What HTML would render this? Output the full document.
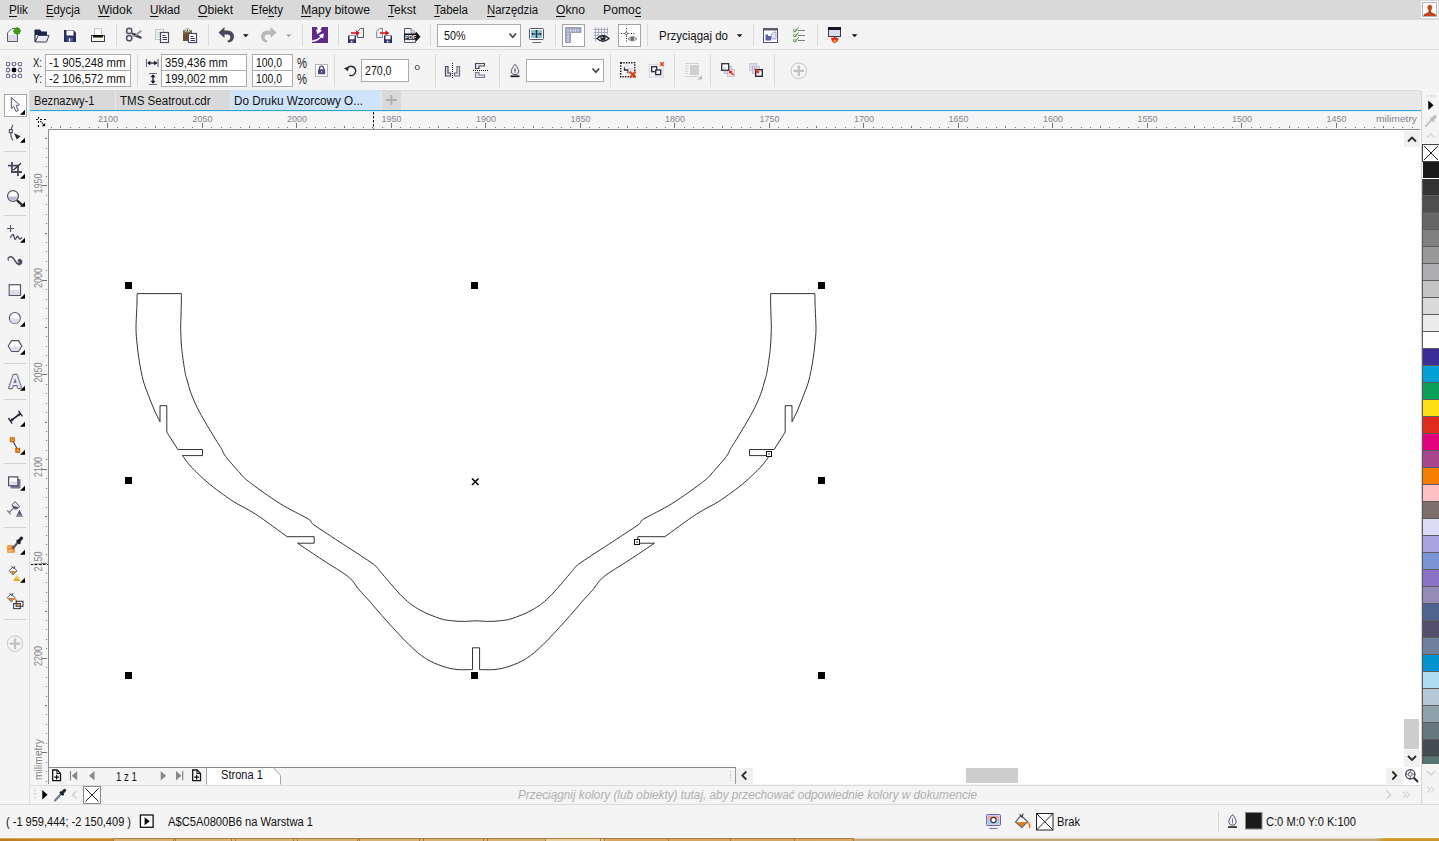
<!DOCTYPE html>
<html lang="pl">
<head>
<meta charset="utf-8">
<title>CorelDRAW - Do Druku Wzorcowy</title>
<style>
html,body{margin:0;padding:0;}
body{width:1439px;height:841px;overflow:hidden;position:relative;background:#f4f4f4;font-family:"Liberation Sans",sans-serif;font-size:12px;color:#1a1a1a;}
.a{position:absolute;}
.t{position:absolute;white-space:nowrap;transform-origin:0 50%;display:block;}
.t u{text-decoration:underline;text-decoration-thickness:1px;text-underline-offset:1.5px;}
.vs{position:absolute;width:1px;background:#dadada;}
.hs{position:absolute;height:1px;background:#d8d8d8;}
.box{position:absolute;background:#fff;border:1px solid #acacac;box-sizing:border-box;}
svg{position:absolute;overflow:visible;}
#menubar{left:0;top:0;width:1439px;height:20px;background:#d9d9d9;}
#tb1{left:0;top:20px;width:1439px;height:29px;background:#f4f4f4;}
#pbar{left:0;top:50px;width:1439px;height:40px;background:#f4f4f4;}
#tabrow{left:30px;top:90px;width:1391px;height:20px;background:#e8e8e8;}
#blueline{left:30px;top:110px;width:1391px;height:1px;background:#389fd2;}
#toolbox{left:0;top:90px;width:29px;height:714px;background:#f4f4f4;}
#hruler{left:30px;top:111px;width:1391px;height:18px;background:#f5f5f5;}
#vruler{left:30px;top:129px;width:18px;height:655px;background:#f5f5f5;}
#canvas{left:48px;top:129px;width:1355px;height:639px;background:#fff;}
</style>
</head>
<body>
<div id="menubar" class="a"></div>
<div id="tb1" class="a"></div>
<div class="hs" style="left:0;top:49px;width:1439px;background:#dedede"></div>
<div id="pbar" class="a"></div>
<div class="hs" style="left:0;top:89px;width:1439px;background:#f6f6f6"></div>
<div id="tabrow" class="a"></div>
<div class="hs" style="left:30px;top:90px;width:1391px;background:#dadada"></div>
<div id="toolbox" class="a"></div>
<div class="vs" style="left:29px;top:90px;height:714px;background:#dedede"></div>
<div id="hruler" class="a"></div>
<div id="vruler" class="a"></div>
<div id="canvas" class="a"></div>
<div id="blueline" class="a"></div>
<!-- menu bar -->
<span class="t" style="left:9px;top:2px;height:17px;line-height:17px;font-size:12px;color:#111;transform:scaleX(0.9814);"><u>P</u>lik</span>
<span class="t" style="left:46px;top:2px;height:17px;line-height:17px;font-size:12px;color:#111;transform:scaleX(0.9436);"><u>E</u>dycja</span>
<span class="t" style="left:98px;top:2px;height:17px;line-height:17px;font-size:12px;color:#111;transform:scaleX(1.0197);"><u>W</u>idok</span>
<span class="t" style="left:150px;top:2px;height:17px;line-height:17px;font-size:12px;color:#111;transform:scaleX(0.9776);"><u>U</u>kład</span>
<span class="t" style="left:198px;top:2px;height:17px;line-height:17px;font-size:12px;color:#111;transform:scaleX(1.0086);"><u>O</u>biekt</span>
<span class="t" style="left:251px;top:2px;height:17px;line-height:17px;font-size:12px;color:#111;transform:scaleX(0.9593);">Efe<u>k</u>ty</span>
<span class="t" style="left:301px;top:2px;height:17px;line-height:17px;font-size:12px;color:#111;transform:scaleX(1.0241);"><u>M</u>apy bitowe</span>
<span class="t" style="left:388px;top:2px;height:17px;line-height:17px;font-size:12px;color:#111;transform:scaleX(0.9994);"><u>T</u>ekst</span>
<span class="t" style="left:434px;top:2px;height:17px;line-height:17px;font-size:12px;color:#111;transform:scaleX(0.9611);"><u>T</u>abela</span>
<span class="t" style="left:487px;top:2px;height:17px;line-height:17px;font-size:12px;color:#111;transform:scaleX(0.9439);"><u>N</u>arzędzia</span>
<span class="t" style="left:556px;top:2px;height:17px;line-height:17px;font-size:12px;color:#111;transform:scaleX(1.0103);"><u>O</u>kno</span>
<span class="t" style="left:603px;top:2px;height:17px;line-height:17px;font-size:12px;color:#111;transform:scaleX(1.0171);">Pomo<u>c</u></span>
<!-- standard toolbar -->
<div class="vs" style="left:116px;top:24px;height:22px"></div>
<div class="vs" style="left:208px;top:24px;height:22px"></div>
<div class="vs" style="left:302px;top:24px;height:22px"></div>
<div class="vs" style="left:338px;top:24px;height:22px"></div>
<div class="vs" style="left:430px;top:24px;height:22px"></div>
<div class="vs" style="left:555px;top:24px;height:22px"></div>
<div class="vs" style="left:647px;top:24px;height:22px"></div>
<div class="vs" style="left:753px;top:24px;height:22px"></div>
<div class="vs" style="left:817px;top:24px;height:22px"></div>
<div class="box" style="left:437px;top:24px;width:84px;height:23px;border-color:#a9a9a9"></div>
<div class="box" style="left:562px;top:24px;width:23px;height:23px;border-color:#a3a3a3"></div>
<div class="box" style="left:618px;top:24px;width:23px;height:23px;border-color:#a3a3a3"></div>
<span class="t" style="left:443.5px;top:26.5px;height:18px;line-height:18px;font-size:12.5px;color:#111;transform:scaleX(0.8589);">50%</span>
<span class="t" style="left:658.5px;top:26.5px;height:18px;line-height:18px;font-size:12.5px;color:#111;transform:scaleX(0.9194);">Przyciągaj do</span>
<svg width="1439" height="52" viewBox="0 0 1439 52" style="left:0;top:0">
<!-- new -->
<path d="M7.5 41.5V33L12 28.5H17.5V41.5Z" fill="#fff" stroke="#5a5a66" stroke-width="1"/>
<rect x="8" y="35" width="9" height="6" fill="#dcdce8"/>
<circle cx="17" cy="31" r="3.2" fill="#3f9a1c"/>
<path d="M17 27v8M13 31h8M14.2 28.2l5.6 5.6M19.8 28.2l-5.6 5.6" stroke="#3f9a1c" stroke-width="1.3"/>
<!-- open -->
<path d="M35 41.5V29.5H40L41.5 31.5H47V35H35Z" fill="#1f2548"/>
<path d="M35.5 42L38 35.5H49L46.5 42Z" fill="#e9e9f2" stroke="#3c3c5a" stroke-width="1"/>
<path d="M35 30v12" stroke="#1f2548" stroke-width="1.2"/>
<!-- save -->
<path d="M64 30H73.5L76 32.5V42H64Z" fill="#2c2e62"/>
<rect x="66.5" y="30.5" width="7" height="5" fill="#fff"/>
<rect x="67" y="37.5" width="6" height="4.5" fill="#50528a"/>
<rect x="69" y="38.5" width="1.2" height="3" fill="#fff"/>
<!-- print -->
<rect x="94.500" y="28.500" width="7" height="8" fill="#fff" stroke="#c5c5c5" stroke-width="1"/>
<rect x="91.500" y="35.500" width="13" height="6" fill="#f6f6dc" stroke="#3a3a4a" stroke-width="1"/>
<rect x="93" y="35" width="10" height="2.500" fill="#111"/>
<rect x="92" y="38" width="12" height="1" fill="#fff"/>
<!-- cut -->
<circle cx="129.200" cy="30.900" r="2.600" fill="none" stroke="#50506a" stroke-width="1.500"/>
<circle cx="129.200" cy="38.200" r="2.600" fill="none" stroke="#50506a" stroke-width="1.500"/>
<path d="M131 32.300L134.500 33.300L142 37L141 39L133 36Z" fill="#4a4a54"/>
<path d="M131 36.800L134 35L141 29.800L142 31.800L135.500 36.200Z" fill="#9c9ca4"/>
<circle cx="134.800" cy="34.400" r="0.900" fill="#111"/>
<!-- copy -->
<rect x="155.500" y="29.500" width="8" height="10" fill="#eef2f2" stroke="#b8c8c8" stroke-width="1"/>
<path d="M157 32.500h5M157 34.500h5M157 36.500h5" stroke="#c5d3d3" stroke-width="1"/>
<rect x="160.500" y="32.500" width="8" height="10" fill="#fff" stroke="#4a4a68" stroke-width="1.200"/>
<path d="M162.500 35.500h3M162.500 37.500h4.500M162.500 39.500h4.500" stroke="#3a3a55" stroke-width="1"/>
<!-- paste -->
<rect x="183" y="30.500" width="9" height="10.500" fill="#6b4f35"/>
<rect x="183" y="30.500" width="9" height="3" fill="#8a6a48"/>
<path d="M185 31.500Q185 28.300 187.500 28.300Q190 28.300 190 31.500Z" fill="#e9efe4" stroke="#9aa78c" stroke-width="0.800"/>
<circle cx="187.500" cy="30.300" r="0.700" fill="#222"/>
<rect x="188.500" y="33.500" width="8" height="9" fill="#fff" stroke="#4a4a68" stroke-width="1.200"/>
<path d="M190.500 36.500h3M190.500 38.500h4.500M190.500 40.500h4.500" stroke="#3a3a55" stroke-width="1"/>
<!-- undo -->
<path d="M218.500 32.500L224.500 27V30.500H227.500C231.500 30.500 234 33.300 234 36.500C234 39.800 231.500 42.300 228.300 42.500L227.300 40.800C229.300 40.300 230.300 38.800 230.300 37.200C230.300 35.500 229 34.500 227.500 34.500H224.500V38Z" fill="#4a4858"/>
<path d="M243 34.300h5.600l-2.800 3z" fill="#111"/>
<!-- redo -->
<path d="M276.500 32.500L270.500 27V30.500H267.500C263.500 30.500 261 33.300 261 36.500C261 39.800 263.500 42.300 266.700 42.500L267.700 40.800C265.700 40.300 264.700 38.800 264.700 37.200C264.700 35.500 266 34.500 267.500 34.500H270.500V38Z" fill="#b9b9b9"/>
<path d="M286 34.300h5.600l-2.800 3z" fill="#a8a8a8"/>
<!-- corel connect purple -->
<rect x="312" y="27" width="16" height="16" fill="#5b2a86"/>
<path d="M312.300 41.900C316 41.600 319.500 40 321.300 37.300L323.200 38.500L323.700 33.300L318.700 35.300L320.300 36.400C318.500 38.700 315.500 39.700 312.300 40.100Z" fill="#fff"/>
<path d="M317 27H321.900L320.400 30.100L322.100 30.700L317.200 34.200L316.100 29.200L317.900 29.800Z" fill="#fff"/>
<!-- import -->
<path d="M357.500 37.500V31.500L360.500 28.500H363.500V37.500Z" fill="#ececf2" stroke="#555566" stroke-width="1"/>
<path d="M351 33h6" stroke="#d8121f" stroke-width="1.600"/>
<path d="M356 30.300L359.800 33L356 35.700Z" fill="#d8121f"/>
<rect x="348" y="35.500" width="8" height="7.500" fill="#2c2e62"/>
<rect x="349.500" y="36" width="5" height="3.300" fill="#fff"/>
<rect x="350" y="40.300" width="4" height="2.700" fill="#50528a"/>
<rect x="351.200" y="40.800" width="1" height="1.700" fill="#fff"/>
<!-- export -->
<path d="M376.500 37.500V31.500L379.500 28.500H382.500V37.500Z" fill="#ececf2" stroke="#8a8a96" stroke-width="1"/>
<path d="M380 33h6.500" stroke="#d8121f" stroke-width="1.600"/>
<path d="M385.500 30.300L389.300 33L385.500 35.700Z" fill="#d8121f"/>
<rect x="384" y="35.500" width="8" height="7.500" fill="#2c2e62"/>
<rect x="385.500" y="36" width="5" height="3.300" fill="#fff"/>
<rect x="386" y="40.300" width="4" height="2.700" fill="#50528a"/>
<rect x="387.200" y="40.800" width="1" height="1.700" fill="#fff"/>
<!-- pdf -->
<path d="M404.500 42.500V28.500H411L415.500 33V42.500Z" fill="#f1f1f5" stroke="#55556a" stroke-width="1"/>
<path d="M411 28.500V33H415.500" fill="#dcdce6" stroke="#8a8a9a" stroke-width="0.800"/>
<path d="M404 33.500H416V31.500L420.500 36.700L416 41.500V39.700H404Z" fill="#15151f"/>
<text x="405" y="39" font-family="Liberation Sans, sans-serif" font-weight="bold" font-size="5.600" fill="#fff" textLength="11" lengthAdjust="spacingAndGlyphs">PDF</text>
<!-- zoom chevron -->
<path d="M509.500 33.500L512.800 37.300L516.100 33.500" fill="none" stroke="#444" stroke-width="1.700"/>
<!-- full screen -->
<rect x="529.500" y="28.500" width="14" height="11" rx="1" fill="#fff" stroke="#55556a" stroke-width="1"/>
<rect x="531" y="30" width="11" height="8" fill="#8fc4d6"/>
<path d="M532 34h9M536.500 30.500v7" stroke="#15303c" stroke-width="1.100"/>
<path d="M531.300 34l1.800-1.500v3zM541.700 34l-1.800-1.500v3zM536.500 29.800l-1.500 1.800h3zM536.500 38.200l-1.500-1.800h3z" fill="#15303c"/>
<path d="M532.500 42.500h8.500" stroke="#6a6a80" stroke-width="1"/>
<!-- rulers -->
<path d="M565.500 27.500H581V32.500H570.500V42.500H565.500Z" fill="#a3a8c0" stroke="#8c92ac" stroke-width="0.800"/>
<path d="M568 29.500v2M570.500 29.500v2M573 29.500v2M575.500 29.500v2M578 29.500v2M567 34h2M567 36.500h2M567 39h2M567 41h2" stroke="#e8eaf4" stroke-width="1"/>
<!-- grid + eye -->
<path d="M593.500 29.500h14M593.500 32.500h14M593.500 35.500h6M593.500 38.500h4M595.500 27.500v14M598.500 27.500v9M601.500 27.500v7M604.500 27.500v7M607.500 27.500v7" stroke="#a9a9c4" stroke-width="1"/>
<path d="M597 38.500Q603 32.500 609 38.500Q603 44 597 38.500Z" fill="#f4f4f4" stroke="#222230" stroke-width="1.300"/>
<circle cx="603" cy="38" r="2.600" fill="#2a2a36"/>
<circle cx="602.200" cy="37.200" r="0.800" fill="#ddd"/>
<!-- guidelines + eye -->
<path d="M621 33.500h15M626.500 28v15" stroke="#222" stroke-width="1" stroke-dasharray="1 1.500"/>
<circle cx="626.500" cy="33.500" r="1.200" fill="#fff" stroke="#333" stroke-width="0.700"/>
<path d="M628 39Q632.500 34 637 39Q632.500 43 628 39Z" fill="#d9d9dd" stroke="#8a8a90" stroke-width="1"/>
<circle cx="632.300" cy="38.700" r="2" fill="#6e6e78"/>
<!-- snap dropdown -->
<path d="M736.800 34.300h5.600l-2.800 3z" fill="#111"/>
<!-- options -->
<rect x="763.500" y="28.500" width="14" height="14" fill="#fff" stroke="#555568" stroke-width="1"/>
<rect x="763" y="28" width="15" height="2.500" fill="#5c5a72"/>
<path d="M765.500 34.500H768V36H771V40.500H765.500Z" fill="#5d5ea9"/>
<path d="M771.500 34L773.500 32H776V39H771.500Z" fill="#dfe0f2" stroke="#8a8cc0" stroke-width="0.700"/>
<!-- checklist -->
<path d="M798 30.500h7M798 35.500h7M798 40.500h7" stroke="#7a7a86" stroke-width="1"/>
<rect x="793.500" y="29.500" width="2.500" height="2.500" fill="#f6fff0" stroke="#8ab87a" stroke-width="0.600"/>
<rect x="793.500" y="34.500" width="2.500" height="2.500" fill="#f6fff0" stroke="#8ab87a" stroke-width="0.600"/>
<rect x="793.500" y="39.500" width="2.500" height="2.500" fill="#f6fff0" stroke="#8ab87a" stroke-width="0.600"/>
<path d="M793.500 30.300l1.500 1.500l3.500-4.300M793.500 35.300l1.500 1.500l3.500-4.300M793.500 40.300l1.500 1.500l3.500-4.300" fill="none" stroke="#357f25" stroke-width="1"/>
<!-- launch -->
<rect x="828.500" y="27.500" width="12" height="9" fill="#dcdcea" stroke="#3a3a4e" stroke-width="1"/>
<rect x="828" y="27" width="13" height="3" fill="#161624"/>
<path d="M831 37.500Q831 41.500 834.700 43.300Q838.600 41.500 838.600 37.500Q837 39 836.300 37Q835 38 834.500 36.500Q833 38.800 831 37.500Z" fill="#e32a1a"/>
<path d="M832.800 40.300Q834.700 44 837 40.300Q835.300 41.200 835 39.300Q834 40.900 832.800 40.300Z" fill="#ffb31a"/>
<path d="M851.800 34.300h5.600l-2.800 3z" fill="#111"/>
</svg>
<!-- property bar -->
<div class="vs" style="left:137px;top:54px;height:33px"></div>
<div class="vs" style="left:334px;top:54px;height:33px"></div>
<div class="vs" style="left:435px;top:54px;height:33px"></div>
<div class="vs" style="left:499px;top:54px;height:33px"></div>
<div class="vs" style="left:610px;top:54px;height:33px"></div>
<div class="vs" style="left:674px;top:54px;height:33px"></div>
<div class="vs" style="left:710px;top:54px;height:33px"></div>
<div class="vs" style="left:774px;top:54px;height:33px"></div>
<div class="box" style="left:45px;top:54px;width:86px;height:17px"></div>
<div class="box" style="left:45px;top:70px;width:86px;height:17px"></div>
<div class="box" style="left:161px;top:54px;width:86px;height:17px"></div>
<div class="box" style="left:161px;top:70px;width:86px;height:17px"></div>
<div class="box" style="left:252px;top:54px;width:41px;height:17px"></div>
<div class="box" style="left:252px;top:70px;width:41px;height:17px"></div>
<div class="box" style="left:315px;top:64px;width:13px;height:13px;border-color:#b4b4b4"></div>
<div class="box" style="left:361px;top:59px;width:48px;height:23px"></div>
<div class="box" style="left:526px;top:59px;width:78px;height:23px"></div>
<span class="t" style="left:33px;top:54px;height:18px;line-height:18px;font-size:12.5px;color:#111;transform:scaleX(0.7619);">X:</span>
<span class="t" style="left:33px;top:70px;height:18px;line-height:18px;font-size:12.5px;color:#111;transform:scaleX(0.8090);">Y:</span>
<span class="t" style="left:48.5px;top:54px;height:18px;line-height:18px;font-size:12.5px;color:#111;transform:scaleX(0.9099);">-1 905,248 mm</span>
<span class="t" style="left:48.5px;top:70px;height:18px;line-height:18px;font-size:12.5px;color:#111;transform:scaleX(0.9099);">-2 106,572 mm</span>
<span class="t" style="left:164.5px;top:54px;height:18px;line-height:18px;font-size:12.5px;color:#111;transform:scaleX(0.8995);">359,436 mm</span>
<span class="t" style="left:164.5px;top:70px;height:18px;line-height:18px;font-size:12.5px;color:#111;transform:scaleX(0.8995);">199,002 mm</span>
<span class="t" style="left:256px;top:54px;height:18px;line-height:18px;font-size:12.5px;color:#111;transform:scaleX(0.8312);">100,0</span>
<span class="t" style="left:256px;top:70px;height:18px;line-height:18px;font-size:12.5px;color:#111;transform:scaleX(0.8312);">100,0</span>
<span class="t" style="left:296.5px;top:52.5px;height:20px;line-height:20px;font-size:14px;color:#222;transform:scaleX(0.8030);">%</span>
<span class="t" style="left:296.5px;top:68.5px;height:20px;line-height:20px;font-size:14px;color:#222;transform:scaleX(0.8030);">%</span>
<span class="t" style="left:364.5px;top:61.5px;height:18px;line-height:18px;font-size:12.5px;color:#111;transform:scaleX(0.8472);">270,0</span>
<svg width="1439" height="92" viewBox="0 0 1439 92" style="left:0;top:0">
<!-- object origin -->
<path d="M8 64h12v12h-12zM14 64v12M8 70h12" fill="none" stroke="#9a9ab4" stroke-width="1"/>
<g fill="#f4f4f4" stroke="#7c7c9c" stroke-width="1">
<rect x="6.500" y="62.500" width="3" height="3"/><rect x="12.500" y="62.500" width="3" height="3"/><rect x="18.500" y="62.500" width="3" height="3"/>
<rect x="6.500" y="68.500" width="3" height="3"/><rect x="18.500" y="68.500" width="3" height="3"/>
<rect x="6.500" y="74.500" width="3" height="3"/><rect x="12.500" y="74.500" width="3" height="3"/><rect x="18.500" y="74.500" width="3" height="3"/>
</g>
<rect x="12" y="68" width="4" height="4" fill="#000"/>
<!-- width icon -->
<path d="M146.500 59v8M158 59v8" stroke="#6a6a8a" stroke-width="1.200"/>
<path d="M148 63h9" stroke="#1a1a2a" stroke-width="1.300"/>
<path d="M147.300 63l3-2.600v5.200zM157.200 63l-3-2.600v5.200z" fill="#1a1a2a"/>
<!-- height icon -->
<path d="M149 73.500h8M149 84.500h8" stroke="#6a6a8a" stroke-width="1.200"/>
<path d="M153 75v8" stroke="#1a1a2a" stroke-width="1.300"/>
<path d="M153 74.300l-2.600 3h5.200zM153 83.800l-2.600-3h5.200z" fill="#1a1a2a"/>
<!-- lock -->
<path d="M319.500 69.500v-1.300a2 2 0 0 1 4.200 0v1.300" fill="none" stroke="#4a4878" stroke-width="1.400"/>
<rect x="318" y="69.300" width="7.200" height="5" rx="0.600" fill="#4a4878"/>
<rect x="321.200" y="71" width="0.900" height="1.600" fill="#d8d8ec"/>
<!-- rotate -->
<path d="M347.300 68.300A4.600 4.600 0 1 1 349.300 75.200" fill="none" stroke="#2a2a34" stroke-width="1.500"/>
<path d="M344 68.200l5-1.800l-1.200 4.800z" fill="#2a2a34"/>
<!-- degree -->
<circle cx="417.300" cy="67.500" r="2.100" fill="none" stroke="#444" stroke-width="1"/>
<!-- mirror h -->
<path d="M445.500 66.500h2.500v6.500h2.500v3h-5z" fill="#e4e4f0" stroke="#4a4a5e" stroke-width="1.200"/>
<path d="M459.500 66.500h-2.500v6.500h-2.500v3h5z" fill="#e4e4f0" stroke="#6c6c84" stroke-width="1.200"/>
<path d="M452.500 63v15" stroke="#111" stroke-width="1" stroke-dasharray="1 1"/>
<!-- mirror v -->
<path d="M475.500 63.500h9v2.500h-5.500v2.500h-3.500z" fill="#e4e4f0" stroke="#4a4a5e" stroke-width="1.200"/>
<path d="M475.500 77.500h9v-2.500h-5.500v-2.500h-3.500z" fill="#e4e4f0" stroke="#7c7c94" stroke-width="1.200"/>
<path d="M473 70.500h15" stroke="#111" stroke-width="1" stroke-dasharray="1 1"/>
<!-- pen nib -->
<path d="M515 64.300C512.500 67 511.200 70 511.200 72L513 74.500h4L518.800 72C518.800 70 517.500 67 515 64.300Z" fill="#f0f0f6" stroke="#55556e" stroke-width="1"/>
<path d="M515 68v5" stroke="#55556e" stroke-width="0.800"/>
<circle cx="515" cy="70.500" r="0.800" fill="#55556e"/>
<rect x="510.500" y="75.500" width="9" height="1.600" fill="#111"/>
<!-- combo chevron -->
<path d="M592.500 68.500L595.800 72.300L599.100 68.500" fill="none" stroke="#444" stroke-width="1.700"/>
<!-- ungroup -->
<rect x="620.700" y="62.700" width="14" height="14" fill="none" stroke="#16161e" stroke-width="1.400" stroke-dasharray="1.400 1.200"/>
<rect x="624.500" y="66" width="3.600" height="3.600" fill="#fff" stroke="#c8c8d4" stroke-width="0.700"/>
<path d="M624.500 67.500v2.500h3.500v2.700h3" fill="none" stroke="#2a2a3a" stroke-width="1.300"/>
<rect x="628.500" y="68.800" width="3.500" height="3.500" fill="none" stroke="#c0c0d0" stroke-width="0.700"/>
<path d="M629.800 71.500l5.800 6M635.600 71.500l-5.800 6" stroke="#e2400f" stroke-width="1.800"/>
<!-- ungroup all -->
<rect x="649.500" y="64.500" width="13.500" height="12.500" fill="#f3f3f7" stroke="#d2d2dc" stroke-width="0.800"/>
<g fill="#dcdce6"><rect x="648.500" y="63.500" width="2" height="2"/><rect x="655" y="63.500" width="2" height="2"/><rect x="648.500" y="69.500" width="2" height="2"/><rect x="662" y="69.500" width="2" height="2"/><rect x="648.500" y="76" width="2" height="2"/><rect x="655" y="76" width="2" height="2"/><rect x="662" y="76" width="2" height="2"/></g>
<rect x="651.700" y="66.700" width="5" height="5" fill="#f6f6fa" stroke="#2a2a3a" stroke-width="1.300"/>
<rect x="655.700" y="70" width="5" height="4.600" fill="#f6f6fa" stroke="#2a2a3a" stroke-width="1.300"/>
<path d="M660.200 62.300l3.600 3.600M663.800 62.300l-3.600 3.600" stroke="#e2400f" stroke-width="1.400"/>
<!-- wrap (disabled) -->
<path d="M685 63.500h14M685 66h3.500M685 68.500h3.500M685 71h3.500M685 73.500h3.500M685 76.500h14" stroke="#d2d2d2" stroke-width="1"/>
<rect x="690.500" y="65.500" width="8" height="9" fill="#d0d0d0" stroke="#c6c6c6" stroke-width="0.600"/>
<path d="M702 75v4.600h-4.800z" fill="#bdbdbd"/>
<!-- to front -->
<rect x="724.500" y="66.500" width="7" height="7" fill="#d6d8ec" stroke="#b4b6d4" stroke-width="0.800"/>
<rect x="727.500" y="69.500" width="7" height="7" fill="#fbe4e2" stroke="#c9b8c4" stroke-width="0.800"/>
<rect x="721.700" y="63.700" width="7" height="6.600" fill="#fff" stroke="#3a3a4e" stroke-width="1.400"/>
<rect x="722.700" y="67" width="4.500" height="2" fill="#e0e0e8"/>
<path d="M733.500 75l-3.500-3.500" stroke="#dc1a0a" stroke-width="1.300"/>
<path d="M729.200 70.700h3.400l-3.400 3.400z" fill="#dc1a0a"/>
<!-- to back -->
<rect x="749.500" y="63.500" width="7" height="7" fill="#dcdde8" stroke="#c0c2d6" stroke-width="0.800"/>
<rect x="752.500" y="66.500" width="7" height="7" fill="#d6d8ec" stroke="#b4b6d4" stroke-width="0.800"/>
<rect x="755.700" y="69.700" width="6.600" height="6.600" fill="#fff" stroke="#2a2a3a" stroke-width="1.400"/>
<path d="M754.500 68.500l3.500 3.500" stroke="#e2300f" stroke-width="1.300"/>
<path d="M759.300 73.300h-3.400l3.400-3.400z" fill="#e2300f"/>
<!-- plus -->
<circle cx="798.800" cy="70.800" r="7.800" fill="none" stroke="#c6c6c6" stroke-width="1"/>
<path d="M793.500 70.800h10.600M798.800 65.500v10.600" stroke="#c0c0c0" stroke-width="2.200"/>
</svg>
<!-- document tabs -->
<div class="a" style="left:30px;top:90px;width:85px;height:20px;background:#d9d9d9"></div>
<div class="a" style="left:116px;top:90px;width:114px;height:20px;background:#d9d9d9"></div>
<div class="a" style="left:231px;top:90px;width:150px;height:20px;background:#cfe3fb"></div>
<div class="a" style="left:382px;top:90px;width:19px;height:20px;background:#d9d9d9"></div>
<span class="t" style="left:33.5px;top:91.5px;height:18px;line-height:18px;font-size:12.5px;color:#111;transform:scaleX(0.8885);">Beznazwy-1</span>
<span class="t" style="left:119.5px;top:91.5px;height:18px;line-height:18px;font-size:12.5px;color:#111;transform:scaleX(0.9239);">TMS Seatrout.cdr</span>
<span class="t" style="left:234px;top:91.5px;height:18px;line-height:18px;font-size:12.5px;color:#111;transform:scaleX(0.9380);">Do Druku Wzorcowy O...</span>
<svg width="1439" height="841" viewBox="0 0 1439 841" style="left:0;top:0">
<path d="M386 100h10.800M391.400 95v10" stroke="#adadad" stroke-width="1.800"/>
<path d="M51.5 127v1M60.5 126v2M70.5 127v1M79.5 127v1M89.5 127v1M98.5 127v1M107.5 123v5M117.5 127v1M126.5 127v1M136.5 127v1M145.5 127v1M155.5 126v2M164.5 127v1M174.5 127v1M183.5 127v1M192.5 127v1M202.5 123v5M211.5 127v1M221.5 127v1M230.5 127v1M240.5 127v1M249.5 126v2M259.5 127v1M268.5 127v1M278.5 127v1M287.5 127v1M296.5 123v5M306.5 127v1M315.5 127v1M325.5 127v1M334.5 127v1M344.5 126v2M353.5 127v1M363.5 127v1M372.5 127v1M382.5 127v1M391.5 123v5M400.5 127v1M410.5 127v1M419.5 127v1M429.5 127v1M438.5 126v2M448.5 127v1M457.5 127v1M467.5 127v1M476.5 127v1M485.5 123v5M495.5 127v1M504.5 127v1M514.5 127v1M523.5 127v1M533.5 126v2M542.5 127v1M552.5 127v1M561.5 127v1M570.5 127v1M580.5 123v5M589.5 127v1M599.5 127v1M608.5 127v1M618.5 127v1M627.5 126v2M637.5 127v1M646.5 127v1M656.5 127v1M665.5 127v1M674.5 123v5M684.5 127v1M693.5 127v1M703.5 127v1M712.5 127v1M722.5 126v2M731.5 127v1M741.5 127v1M750.5 127v1M760.5 127v1M769.5 123v5M778.5 127v1M788.5 127v1M797.5 127v1M807.5 127v1M816.5 126v2M826.5 127v1M835.5 127v1M845.5 127v1M854.5 127v1M863.5 123v5M873.5 127v1M882.5 127v1M892.5 127v1M901.5 127v1M911.5 126v2M920.5 127v1M930.5 127v1M939.5 127v1M948.5 127v1M958.5 123v5M967.5 127v1M977.5 127v1M986.5 127v1M996.5 127v1M1005.5 126v2M1015.5 127v1M1024.5 127v1M1034.5 127v1M1043.5 127v1M1052.5 123v5M1062.5 127v1M1071.5 127v1M1081.5 127v1M1090.5 127v1M1100.5 126v2M1109.5 127v1M1119.5 127v1M1128.5 127v1M1138.5 127v1M1147.5 123v5M1156.5 127v1M1166.5 127v1M1175.5 127v1M1185.5 127v1M1194.5 126v2M1204.5 127v1M1213.5 127v1M1223.5 127v1M1232.5 127v1M1241.5 123v5M1251.5 127v1M1260.5 127v1M1270.5 127v1M1279.5 127v1M1289.5 126v2M1298.5 127v1M1308.5 127v1M1317.5 127v1M1326.5 127v1M1336.5 123v5M1345.5 127v1M1355.5 127v1M1364.5 127v1M1374.5 127v1M1383.5 126v2M1393.5 127v1M1402.5 127v1M1412.5 127v1" stroke="#747474" stroke-width="1"/>
<path d="M45 138.5h2M46 148.5h1M46 157.5h1M46 166.5h1M46 176.5h1M42 185.5h5M46 195.5h1M46 204.5h1M46 214.5h1M46 223.5h1M45 233.5h2M46 242.5h1M46 251.5h1M46 261.5h1M46 270.5h1M42 280.5h5M46 289.5h1M46 299.5h1M46 308.5h1M46 318.5h1M45 327.5h2M46 336.5h1M46 346.5h1M46 355.5h1M46 365.5h1M42 374.5h5M46 384.5h1M46 393.5h1M46 403.5h1M46 412.5h1M45 422.5h2M46 431.5h1M46 440.5h1M46 450.5h1M46 459.5h1M42 469.5h5M46 478.5h1M46 488.5h1M46 497.5h1M46 507.5h1M45 516.5h2M46 526.5h1M46 535.5h1M46 544.5h1M46 554.5h1M42 563.5h5M46 573.5h1M46 582.5h1M46 592.5h1M46 601.5h1M45 611.5h2M46 620.5h1M46 629.5h1M46 639.5h1M46 648.5h1M42 658.5h5M46 667.5h1M46 677.5h1M46 686.5h1M46 696.5h1M45 705.5h2M46 714.5h1M46 724.5h1M46 733.5h1M46 743.5h1M42 752.5h5M46 762.5h1M46 771.5h1M46 781.5h1" stroke="#747474" stroke-width="1"/>
<path d="M48.500 129.500H1420" stroke="#8c8c8c" stroke-width="1"/>
<path d="M48.500 129.500V767" stroke="#8c8c8c" stroke-width="1"/>
<text x="107.95" y="121.800" text-anchor="middle" font-size="9.800" fill="#84848e" textLength="20" lengthAdjust="spacingAndGlyphs">2100</text>
<text x="202.45" y="121.800" text-anchor="middle" font-size="9.800" fill="#84848e" textLength="20" lengthAdjust="spacingAndGlyphs">2050</text>
<text x="296.95" y="121.800" text-anchor="middle" font-size="9.800" fill="#84848e" textLength="20" lengthAdjust="spacingAndGlyphs">2000</text>
<text x="391.45" y="121.800" text-anchor="middle" font-size="9.800" fill="#84848e" textLength="20" lengthAdjust="spacingAndGlyphs">1950</text>
<text x="485.95" y="121.800" text-anchor="middle" font-size="9.800" fill="#84848e" textLength="20" lengthAdjust="spacingAndGlyphs">1900</text>
<text x="580.45" y="121.800" text-anchor="middle" font-size="9.800" fill="#84848e" textLength="20" lengthAdjust="spacingAndGlyphs">1850</text>
<text x="674.95" y="121.800" text-anchor="middle" font-size="9.800" fill="#84848e" textLength="20" lengthAdjust="spacingAndGlyphs">1800</text>
<text x="769.45" y="121.800" text-anchor="middle" font-size="9.800" fill="#84848e" textLength="20" lengthAdjust="spacingAndGlyphs">1750</text>
<text x="863.95" y="121.800" text-anchor="middle" font-size="9.800" fill="#84848e" textLength="20" lengthAdjust="spacingAndGlyphs">1700</text>
<text x="958.45" y="121.800" text-anchor="middle" font-size="9.800" fill="#84848e" textLength="20" lengthAdjust="spacingAndGlyphs">1650</text>
<text x="1052.95" y="121.800" text-anchor="middle" font-size="9.800" fill="#84848e" textLength="20" lengthAdjust="spacingAndGlyphs">1600</text>
<text x="1147.45" y="121.800" text-anchor="middle" font-size="9.800" fill="#84848e" textLength="20" lengthAdjust="spacingAndGlyphs">1550</text>
<text x="1241.95" y="121.800" text-anchor="middle" font-size="9.800" fill="#84848e" textLength="20" lengthAdjust="spacingAndGlyphs">1500</text>
<text x="1336.45" y="121.800" text-anchor="middle" font-size="9.800" fill="#84848e" textLength="20" lengthAdjust="spacingAndGlyphs">1450</text>
<text x="1376" y="121.800" font-size="9.800" fill="#84848e" textLength="41" lengthAdjust="spacingAndGlyphs">milimetry</text>
<text transform="translate(41.500 183.5) rotate(-90)" text-anchor="middle" font-size="10" fill="#858588" textLength="20" lengthAdjust="spacingAndGlyphs">1950</text>
<text transform="translate(41.500 278) rotate(-90)" text-anchor="middle" font-size="10" fill="#858588" textLength="20" lengthAdjust="spacingAndGlyphs">2000</text>
<text transform="translate(41.500 372.5) rotate(-90)" text-anchor="middle" font-size="10" fill="#858588" textLength="20" lengthAdjust="spacingAndGlyphs">2050</text>
<text transform="translate(41.500 467) rotate(-90)" text-anchor="middle" font-size="10" fill="#858588" textLength="20" lengthAdjust="spacingAndGlyphs">2100</text>
<text transform="translate(41.500 561.5) rotate(-90)" text-anchor="middle" font-size="10" fill="#858588" textLength="20" lengthAdjust="spacingAndGlyphs">2150</text>
<text transform="translate(41.500 656) rotate(-90)" text-anchor="middle" font-size="10" fill="#858588" textLength="20" lengthAdjust="spacingAndGlyphs">2200</text>
<text transform="translate(41.500 780) rotate(-90)" font-size="10" fill="#858588" textLength="41" lengthAdjust="spacingAndGlyphs">milimetry</text>
<path d="M36 119.500h1.800M40 119.500h1.900M44 119.500h2M38.500 117v1.800M38.500 121v1.800M38.500 125v2" stroke="#000" stroke-width="1.100"/>
<path d="M40.300 121.200L44 125" stroke="#000" stroke-width="1.100" stroke-dasharray="1.300 0.700"/>
<path d="M45.200 123v3.300h-3.400z" fill="#000"/>
<path d="M373.500 112v16.500" stroke="#111" stroke-width="1" stroke-dasharray="2.500 1.500"/>
<path d="M31 564.500h17" stroke="#111" stroke-width="1" stroke-dasharray="2.500 1.500"/>
<path d="M30 111.500H1421" stroke="#d6f2fb" stroke-width="1"/>
</svg>
<!-- toolbox -->
<div class="box" style="left:4px;top:94px;width:23px;height:23px;border-color:#a6a6a6"></div>
<div class="hs" style="left:4px;top:151px;width:22px;background:#d2d2d2"></div>
<div class="hs" style="left:4px;top:215px;width:22px;background:#d2d2d2"></div>
<div class="hs" style="left:4px;top:363px;width:22px;background:#d2d2d2"></div>
<div class="hs" style="left:4px;top:399px;width:22px;background:#d2d2d2"></div>
<div class="hs" style="left:4px;top:463px;width:22px;background:#d2d2d2"></div>
<div class="hs" style="left:4px;top:527px;width:22px;background:#d2d2d2"></div>
<div class="hs" style="left:4px;top:619px;width:22px;background:#d2d2d2"></div>
<svg width="30" height="700" viewBox="0 0 30 700" style="left:0;top:0">
<defs>
<linearGradient id="gsh" x1="0" y1="0" x2="0" y2="1"><stop offset="0" stop-color="#2e2e44"/><stop offset="1" stop-color="#9a9ab0"/></linearGradient>
<linearGradient id="gye" x1="0" y1="0" x2="0" y2="1"><stop offset="0" stop-color="#fff0a0"/><stop offset="1" stop-color="#e8a010"/></linearGradient>
</defs>
<!-- flyout triangles -->
<g fill="#000">
<path d="M20 114.700h5v-5z"/><path d="M20 142.700h5v-5z"/><path d="M20 178.700h5v-5z"/><path d="M20 206.700h5v-5z"/>
<path d="M20 242.700h5v-5z"/><path d="M20 298.700h5v-5z"/><path d="M20 326.700h5v-5z"/><path d="M20 354.700h5v-5z"/>
<path d="M20 390.700h5v-5z"/><path d="M20 426.700h5v-5z"/><path d="M20 454.700h5v-5z"/><path d="M20 490.700h5v-5z"/>
<path d="M20 554.700h5v-5z"/><path d="M20 582.700h5v-5z"/>
</g>
<!-- pick -->
<path d="M11.300 97.500V108.500L13.600 106.500L16 111.600L18.300 110.500L16.200 105.600L19.400 104.800Z" fill="#f3f3fa" stroke="#55556c" stroke-width="1"/>
<!-- shape -->
<path d="M12.800 125C10.200 130 10.200 136 12.800 140.500" fill="none" stroke="#55556a" stroke-width="1.200"/>
<rect x="9.300" y="129.700" width="3" height="3" fill="#fff" stroke="#3a3a4e" stroke-width="1"/>
<path d="M14 133.200L20.600 136.300L16.800 139.600Z" fill="#2a2a3a"/>
<!-- crop -->
<path d="M8 165.600h11M12 162v11M11 172h11M18 165v11" stroke="#4a4a5e" stroke-width="1.800"/>
<path d="M21 163.200L13.500 170" stroke="#2a2a3a" stroke-width="1.200"/>
<!-- zoom -->
<circle cx="13" cy="196" r="5.400" fill="#fff" stroke="#4a4a5c" stroke-width="1.200"/>
<path d="M8.800 196.600h8.400a4.200 4.200 0 0 1 -8.400 0z" fill="#bcbcd4"/>
<path d="M17 200.300L23.200 206" stroke="#26262e" stroke-width="2.300"/>
<!-- freehand -->
<path d="M7 228.500h7M10.500 225v7" stroke="#55556a" stroke-width="1.100"/>
<path d="M10.300 237.800C11.800 235 13.200 233.500 13.800 235.500C14.400 237.500 14.600 240 15.600 239C16.600 238 17.200 235 18 236.500C18.800 238 19.500 239.800 20.500 238.800L22 237.500" fill="none" stroke="#4a4a5e" stroke-width="1.300"/>
<!-- artistic media -->
<path d="M8.800 260.800C7.300 258.500 9.500 256.800 11.500 257.500C14.500 258.500 14.800 263.500 18.200 264.800C20.500 265.500 22.400 263.800 22 261.200C21.600 259 19.200 258.300 18.200 259.800C17.500 261 18.500 262.200 19.500 261.800C19.800 263.300 18 263.500 17 262.500C14.800 260.300 14 256.500 10.800 256.300C8 256.200 6.800 259 8.800 260.800Z" fill="#4a4858" stroke="#4a4858" stroke-width="0.600"/>
<!-- rectangle -->
<rect x="9.200" y="284.700" width="11.300" height="10.700" fill="#fff" stroke="#55556a" stroke-width="1.200"/>
<rect x="9.800" y="290" width="10.100" height="4.800" fill="#dcdcea"/>
<!-- ellipse -->
<circle cx="14.800" cy="318" r="5.500" fill="#fff" stroke="#55556a" stroke-width="1.200"/>
<path d="M9.900 318.600h9.800a4.900 4.900 0 0 1 -9.800 0z" fill="#dcdcea"/>
<!-- polygon -->
<path d="M8.300 346L11.500 340.700H18.500L21.800 346L18.500 351.500H11.500Z" fill="#fff" stroke="#55556a" stroke-width="1.200"/>
<path d="M9.300 346.500h11.500L18.200 350.900H11.900z" fill="#dcdcea"/>
<!-- text -->
<text x="8.700" y="388" font-size="18.500" font-weight="bold" fill="#ececf6" stroke="#73738f" stroke-width="2.400" stroke-linejoin="round" paint-order="stroke" textLength="12.600" lengthAdjust="spacingAndGlyphs">A</text>
<!-- dimension -->
<path d="M10.500 421L20.500 413.500" stroke="#2a2a3a" stroke-width="1.600"/>
<path d="M8.400 418L12.200 423.600M18.600 410.800L22.400 416.400" stroke="#2a2a3a" stroke-width="1.400"/>
<path d="M10 421.400L13.600 420.600L11.800 418zM21 413.100L17.400 413.900L19.200 416.500z" fill="#2a2a3a"/>
<!-- connector -->
<path d="M12.300 440L17.800 450" stroke="#4a4a5e" stroke-width="1.200"/>
<rect x="10.300" y="437.800" width="4" height="4" fill="#f28c1c" stroke="#b65c12" stroke-width="0.900"/>
<rect x="15.800" y="448.300" width="4" height="4" fill="#f28c1c" stroke="#b65c12" stroke-width="0.900"/>
<!-- drop shadow -->
<rect x="10.500" y="479" width="10" height="9.500" rx="1" fill="#77778e"/>
<rect x="8.600" y="476.900" width="9.200" height="8.800" fill="#fff" stroke="#4a4a62" stroke-width="1.200"/>
<rect x="9.200" y="481.500" width="8" height="3.600" fill="#dcdcea"/>
<!-- transparency -->
<path d="M12.300 504.500L15 501.500L19.300 506.300C18.500 509 15 510 13.300 508Z" fill="#e8e8f2" stroke="#55556a" stroke-width="1"/>
<path d="M12.800 505.800L18.800 507.300C17.500 509.300 14.500 509.600 13.300 508Z" fill="#55556a"/>
<path d="M13.500 508.200L9 512.500M7.200 510.300L10.800 514.500" stroke="#6a6a80" stroke-width="1.100"/>
<path d="M19.500 509.800L23.300 517H15.700Z" fill="url(#gsh)"/>
<!-- eyedropper -->
<rect x="7.300" y="545.300" width="7.400" height="7.400" fill="#ee7f12"/>
<rect x="8.500" y="546.500" width="2.200" height="2.200" fill="#f9b870"/><rect x="11" y="549.500" width="2.200" height="2.200" fill="#f9b870"/><rect x="8.500" y="549.800" width="2" height="2" fill="#fbd6a8"/>
<path d="M12.500 548.800L18.500 541.800" stroke="#5a5a6e" stroke-width="2.200"/>
<path d="M16.800 540.200L20.300 543.700" stroke="#1e1e2a" stroke-width="2"/>
<path d="M18.300 541.800L21.500 538.200" stroke="#1e1e2a" stroke-width="3.200" stroke-linecap="round"/>
<!-- interactive fill -->
<path d="M9.300 570.500L13.200 566.800L17 570.800L13 574.800Z" fill="#f6f6fa" stroke="#55556a" stroke-width="1"/>
<path d="M10.300 571L16.300 571.200L13 574.300Z" fill="#e07a10"/>
<path d="M11.500 566.300L14 568.800M14.800 566.300L14.200 568.500" stroke="#44445a" stroke-width="1"/>
<path d="M16.800 574L20.300 581H13.300Z" fill="url(#gye)"/>
<!-- smart fill -->
<path d="M7.300 597.500L11.200 593.800L15 597.800L11 601.800Z" fill="#f6f6fa" stroke="#55556a" stroke-width="1"/>
<path d="M8.300 598L14.300 598.200L11 601.300Z" fill="#e07a10"/>
<path d="M9.500 593.300L12 595.800M12.800 593.300L12.200 595.500" stroke="#44445a" stroke-width="1"/>
<path d="M14.500 598.500L16.500 600.500V603" fill="none" stroke="#e07a10" stroke-width="1.300"/>
<rect x="13.600" y="603.600" width="6.800" height="5" fill="#f4f4f8" stroke="#3e3e56" stroke-width="1.100"/>
<rect x="16.200" y="601.300" width="6.800" height="5" fill="none" stroke="#3e3e56" stroke-width="1.100"/>
<rect x="16.800" y="604.200" width="3" height="1.600" fill="#e88412"/>
<!-- plus -->
<circle cx="15" cy="643.600" r="7.800" fill="none" stroke="#c6c6c6" stroke-width="1"/>
<path d="M9.700 643.600h10.600M15 638.300v10.600" stroke="#c0c0c0" stroke-width="2.200"/>
</svg>
<!-- drawing canvas -->
<svg width="1439" height="841" viewBox="0 0 1439 841" style="left:0;top:0">
<path d="M137.1 293.6C137.1 296.1 137.0 302.7 136.8 308.5C136.6 314.3 135.9 322.6 136.0 328.5C136.1 334.4 136.5 338.7 137.1 344.2C137.7 349.7 138.3 355.3 139.3 361.4C140.3 367.5 141.8 375.3 143.3 381.0C144.9 386.7 146.8 390.9 148.6 395.7C150.4 400.5 152.4 405.7 154.3 410.0C156.2 414.3 159.1 419.8 160.0 421.7L160.0 405.7L166.8 405.7L166.8 432.1L177.8 449.5L202.5 449.5L202.5 455.6L182.4 455.6C183.9 457.5 187.3 462.7 191.4 467.1C195.5 471.5 202.3 477.9 207.1 482.1C211.9 486.3 215.5 488.8 220.0 492.1C224.5 495.4 228.4 498.4 234.3 502.1C240.2 505.8 246.9 508.4 255.7 514.2C264.5 520.0 281.9 533.0 287.1 536.7L314.2 536.7L314.2 543.2L297.5 543.2C301.8 546.0 314.5 554.6 323.0 560.2C331.5 565.8 342.5 572.0 348.5 577.0C354.5 582.0 355.9 586.1 359.2 589.9C362.5 593.7 363.9 594.8 368.5 600.0C373.1 605.2 380.4 614.0 387.1 621.4C393.8 628.8 402.1 638.0 408.5 644.2C414.9 650.4 419.9 654.8 425.6 658.5C431.3 662.2 437.6 664.5 442.8 666.3C448.0 668.1 452.1 669.0 457.0 669.5C461.9 670.0 469.9 669.6 472.5 669.6L472.5 647.8L479.6 647.8L479.6 669.6C482.2 669.6 490.1 670.0 495.0 669.5C499.9 669.0 504.0 668.1 509.2 666.3C514.4 664.5 520.7 662.2 526.4 658.5C532.1 654.8 537.1 650.4 543.5 644.2C549.9 638.0 558.2 628.8 564.9 621.4C571.6 614.0 578.9 605.2 583.5 600.0C588.1 594.8 589.5 593.7 592.8 589.9C596.1 586.1 597.5 582.0 603.5 577.0C609.5 572.0 620.5 565.8 629.0 560.2C637.5 554.6 650.2 546.0 654.5 543.2L637.8 543.2L637.8 536.7L664.9 536.7C670.1 533.0 687.5 520.0 696.3 514.2C705.1 508.4 711.8 505.8 717.7 502.1C723.7 498.4 727.5 495.4 732.0 492.1C736.5 488.8 740.1 486.3 744.9 482.1C749.7 477.9 756.5 471.5 760.6 467.1C764.7 462.7 768.1 457.5 769.6 455.6L749.5 455.6L749.5 449.5L774.2 449.5L785.2 432.1L785.2 405.7L792.0 405.7L792.0 421.7C793.0 419.8 795.8 414.3 797.7 410.0C799.6 405.7 801.6 400.5 803.4 395.7C805.2 390.9 807.2 386.7 808.7 381.0C810.2 375.3 811.7 367.5 812.7 361.4C813.7 355.3 814.4 349.7 814.9 344.2C815.4 338.7 816.0 334.4 816.0 328.5C816.0 322.6 815.4 314.3 815.2 308.5C815.0 302.7 815.0 296.1 814.9 293.6L770.6 293.6C770.6 295.3 770.6 300.3 770.7 304.0C770.8 307.7 770.9 311.9 771.0 316.0C771.1 320.1 771.4 323.1 771.3 328.5C771.2 333.9 771.0 341.4 770.3 348.5C769.6 355.6 768.0 366.1 767.1 371.3C766.2 376.6 766.0 376.2 764.9 380.0C763.8 383.8 762.7 388.8 760.6 394.3C758.5 399.8 755.9 405.7 752.1 412.8C748.3 419.9 741.4 431.2 737.8 437.1C734.2 443.1 732.6 445.3 730.7 448.5C728.8 451.7 729.3 452.6 726.4 456.4C723.5 460.2 717.3 467.2 713.5 471.4C709.7 475.6 710.4 476.0 703.5 481.4C696.6 486.8 682.1 497.2 672.1 503.5C662.1 509.8 649.2 515.6 643.5 519.2C637.8 522.8 643.7 520.8 637.8 525.0C631.9 529.2 618.1 538.1 608.2 544.6C598.3 551.1 584.6 559.8 578.6 564.2C572.6 568.7 576.9 565.8 572.0 571.3C567.1 576.8 555.9 590.6 549.2 597.1C542.6 603.6 538.3 606.4 532.1 610.0C525.9 613.6 517.3 616.7 512.1 618.5C506.9 620.3 504.5 620.2 500.7 620.7C496.9 621.2 493.3 621.4 489.2 621.4C485.1 621.4 478.2 620.9 476.0 620.8C473.8 620.9 466.9 621.4 462.8 621.4C458.7 621.4 455.1 621.2 451.3 620.7C447.5 620.2 445.1 620.3 439.9 618.5C434.7 616.7 426.1 613.6 419.9 610.0C413.7 606.4 409.4 603.6 402.8 597.1C396.2 590.6 384.9 576.8 380.0 571.3C375.1 565.8 379.4 568.7 373.4 564.2C367.4 559.8 353.7 551.1 343.8 544.6C333.9 538.1 320.1 529.2 314.2 525.0C308.3 520.8 314.2 522.8 308.5 519.2C302.8 515.6 289.9 509.8 279.9 503.5C269.9 497.2 255.4 486.8 248.5 481.4C241.6 476.0 242.3 475.6 238.5 471.4C234.7 467.2 228.5 460.2 225.6 456.4C222.7 452.6 223.2 451.7 221.3 448.5C219.4 445.3 217.8 443.1 214.2 437.1C210.6 431.2 203.7 419.9 199.9 412.8C196.1 405.7 193.5 399.8 191.4 394.3C189.3 388.8 188.2 383.8 187.1 380.0C186.0 376.2 185.8 376.6 184.9 371.3C184.0 366.1 182.4 355.6 181.7 348.5C181.0 341.4 180.8 333.9 180.7 328.5C180.6 323.1 180.9 320.1 181.0 316.0C181.1 311.9 181.2 307.7 181.3 304.0C181.4 300.3 181.4 295.3 181.4 293.6Z" fill="none" stroke="#1c1c1c" stroke-width="0.900" stroke-linejoin="miter"/>
<rect x="125" y="282" width="7" height="7" fill="#000"/>
<rect x="125" y="477" width="7" height="7" fill="#000"/>
<rect x="125" y="672" width="7" height="7" fill="#000"/>
<rect x="471" y="282" width="7" height="7" fill="#000"/>
<rect x="471" y="672" width="7" height="7" fill="#000"/>
<rect x="818" y="282" width="7" height="7" fill="#000"/>
<rect x="818" y="477" width="7" height="7" fill="#000"/>
<rect x="818" y="672" width="7" height="7" fill="#000"/>
<path d="M472 478.500L478.500 485M478.500 478.500L472 485" stroke="#000" stroke-width="1.600"/>
<rect x="766.500" y="451.500" width="5" height="5" fill="#fff" stroke="#111" stroke-width="1"/><rect x="768.200" y="453.200" width="1.600" height="1.600" fill="#777"/>
<rect x="634.500" y="539.500" width="5" height="5" fill="#fff" stroke="#111" stroke-width="1"/><rect x="636.200" y="541.200" width="1.600" height="1.600" fill="#777"/>
</svg>
<!-- page navigator, scrollbars, document palette, status bar -->
<div class="hs" style="left:48px;top:767px;width:688px;background:#8c8c8c"></div>
<div class="a" style="left:49px;top:768px;width:1354px;height:17px;background:#f4f4f4"></div>
<div class="vs" style="left:48px;top:768px;height:16px;background:#8c8c8c"></div>
<div class="a" style="left:736px;top:768px;width:667px;height:16px;background:#fff"></div>
<div class="vs" style="left:735px;top:768px;height:16px;background:#9a9a9a"></div>
<div class="a" style="left:736px;top:768px;width:17px;height:16px;background:#f0f0f0"></div>
<div class="a" style="left:1386px;top:768px;width:17px;height:16px;background:#f0f0f0"></div>
<div class="a" style="left:966px;top:768px;width:52px;height:15px;background:#cdcdcd"></div>
<div class="a" style="left:1403px;top:130px;width:18px;height:655px;background:#fff"></div>
<div class="a" style="left:1404px;top:131px;width:16px;height:16px;background:#f0f0f0"></div>
<div class="a" style="left:1404px;top:750px;width:16px;height:17px;background:#f0f0f0"></div>
<div class="a" style="left:1404px;top:719px;width:15px;height:30px;background:#cdcdcd"></div>
<div class="a" style="left:1403px;top:768px;width:18px;height:17px;background:#fff"></div>
<div class="hs" style="left:30px;top:785px;width:1391px;background:#dcdcdc"></div>
<div class="a" style="left:30px;top:786px;width:1391px;height:18px;background:#f4f4f4"></div>
<div class="hs" style="left:0;top:804px;width:1439px;background:#dcdcdc"></div>
<div class="a" style="left:0;top:805px;width:1439px;height:33px;background:#f4f4f4"></div>
<svg width="1439" height="841" viewBox="0 0 1439 841" style="left:0;top:0">
<path d="M206.500 784.500V768H273.500L280.500 775.500V784.500Z" fill="#fff"/>
<path d="M206.500 784.500V768M273.500 767.500L280.500 775.500V784.500" fill="none" stroke="#a4a4a4" stroke-width="1"/>
<path d="M52.7 770h4.400l3.400 3.400v7.200h-7.800z" fill="#fff" stroke="#111" stroke-width="1.300"/>
<path d="M57 770v3.500h3.500" fill="none" stroke="#111" stroke-width="1.100"/>
<path d="M54.2 777.1h4.800M56.6 774.7v4.800" stroke="#111" stroke-width="1.300"/>
<path d="M192.7 770h4.400l3.400 3.400v7.200h-7.800z" fill="#fff" stroke="#111" stroke-width="1.300"/>
<path d="M197 770v3.500h3.500" fill="none" stroke="#111" stroke-width="1.100"/>
<path d="M194.2 777.1h4.800M196.6 774.7v4.800" stroke="#111" stroke-width="1.300"/>
<path d="M70.500 771v9.500" stroke="#888" stroke-width="1.200"/><path d="M77.200 771v9.500l-5.400-4.750z" fill="#888"/>
<path d="M94.500 771v9.500l-5.400-4.750z" fill="#888"/>
<path d="M160.700 771v9.500l5.400-4.750z" fill="#888"/>
<path d="M176 771v9.500l5.400-4.750z" fill="#888"/><path d="M182.700 771v9.500" stroke="#888" stroke-width="1.200"/>
<path d="M730.500 771v10" stroke="#b4b4b4" stroke-width="1.200" stroke-dasharray="1.200 2"/>
<path d="M746.300 771.500L742.300 775.500L746.300 779.500" fill="none" stroke="#2a2a2a" stroke-width="1.800"/>
<path d="M1392.300 771.500L1396.300 775.500L1392.300 779.500" fill="none" stroke="#2a2a2a" stroke-width="1.800"/>
<path d="M1408 141.500L1412 137.500L1416 141.500" fill="none" stroke="#2a2a2a" stroke-width="1.800"/>
<path d="M1408 756L1412 760L1416 756" fill="none" stroke="#2a2a2a" stroke-width="1.800"/>
<circle cx="1410.300" cy="774.300" r="4.600" fill="#fff" stroke="#3e3e56" stroke-width="1.200"/>
<circle cx="1410.300" cy="774.300" r="2" fill="none" stroke="#3e3e56" stroke-width="0.900"/>
<path d="M1410.300 769v2.500M1410.300 777v2.500M1405 774.300h2.500M1413 774.300h2.500" stroke="#3e3e56" stroke-width="0.900"/>
<path d="M1413.800 777.800L1418 782" stroke="#26262e" stroke-width="2"/>
<path d="M35 789.500v10" stroke="#c4c4c4" stroke-width="1.400" stroke-dasharray="1.400 2.200"/>
<path d="M42.300 790v9.400l5.200-4.700z" fill="#000"/>
<path d="M55 800.500L61.500 793.500" stroke="#6a8088" stroke-width="2.200" stroke-linecap="round"/>
<path d="M60 791.800L63.500 795.300" stroke="#222232" stroke-width="2"/>
<path d="M61.800 793.300L64.500 790.500" stroke="#222232" stroke-width="3.200" stroke-linecap="round"/>
<path d="M76.500 791L72.500 794.700L76.500 798.400" fill="none" stroke="#cfcfcf" stroke-width="1.400"/>
<rect x="83.500" y="786.500" width="17" height="17" fill="#fff" stroke="#8a8a8a" stroke-width="1"/>
<path d="M85.500 788.500L98.500 801.500M98.500 788.500L85.500 801.500" stroke="#222" stroke-width="1"/>
<path d="M1386.500 790.500L1390.700 794.700L1386.500 798.900" fill="none" stroke="#cfcfcf" stroke-width="1.300"/>
<path d="M1403 791.700L1406 794.700L1403 797.700M1406.500 791.700L1409.500 794.700L1406.500 797.700" fill="none" stroke="#c4c4c4" stroke-width="1"/>
<rect x="140.400" y="815" width="12.700" height="12.300" fill="#fff" stroke="#111" stroke-width="1.300"/>
<path d="M144.600 817.200v8l5-4z" fill="#000"/>
<path d="M1218.500 811v20" stroke="#d8d8d8" stroke-width="1"/>
<rect x="986.500" y="814.500" width="14" height="11" rx="1" fill="#cfd0ee" stroke="#6668a8" stroke-width="1"/>
<rect x="988" y="816" width="11" height="8" fill="#e8a8a8"/>
<rect x="988" y="820" width="11" height="4" fill="#a8c8e8"/>
<circle cx="993.500" cy="820" r="2.600" fill="#fff" stroke="#333" stroke-width="1.100"/>
<path d="M989.500 828.500h8" stroke="#7a7ab0" stroke-width="1.200"/>
<path d="M1015.500 822L1021 815.500L1027.500 821.500L1022 827.500Z" fill="#fafafa" stroke="#4a4a5e" stroke-width="1.100"/>
<path d="M1016.500 822.300L1026.500 822L1022 826.800Z" fill="#e07a10"/>
<path d="M1019.500 814L1022 817.500M1023 813.500L1022.300 817" stroke="#3a3a4e" stroke-width="1.100"/>
<path d="M1027.500 822.500Q1030.500 824 1029.500 828" fill="none" stroke="#e07a10" stroke-width="1.600"/>
<rect x="1036.500" y="813.500" width="16.500" height="16.500" fill="#fff" stroke="#222" stroke-width="1"/>
<path d="M1037 814L1052.500 829.500M1052.500 814L1037 829.500" stroke="#222" stroke-width="1"/>
<path d="M1232.500 814.500C1230 817.500 1228.800 820.500 1228.800 822.500L1230.500 825h4L1236.200 822.500C1236.200 820.500 1235 817.500 1232.500 814.500Z" fill="#f0f0f6" stroke="#55556e" stroke-width="1"/>
<path d="M1232.500 818.500v5" stroke="#55556e" stroke-width="0.800"/>
<rect x="1228" y="826.300" width="9" height="1.500" fill="#111"/>
<rect x="1245.500" y="812.500" width="16.500" height="16.500" fill="#1a1a1a" stroke="#8a8a8a" stroke-width="1"/>
</svg>
<span class="t" style="left:116px;top:768px;height:18px;line-height:18px;font-size:12.5px;color:#111;transform:scaleX(0.7746);">1 z 1</span>
<span class="t" style="left:221px;top:765.5px;height:18px;line-height:18px;font-size:12.5px;color:#111;transform:scaleX(0.8886);">Strona 1</span>
<span class="t" style="left:518px;top:787px;height:17px;line-height:17px;font-size:12px;color:#b0b0b0;transform:scaleX(0.9803);font-style:italic;">Przeciągnij kolory (lub obiekty) tutaj, aby przechować odpowiednie kolory w dokumencie</span>
<span class="t" style="left:5.5px;top:812.5px;height:18px;line-height:18px;font-size:12.5px;color:#111;transform:scaleX(0.8817);">( -1 959,444; -2 150,409 )</span>
<span class="t" style="left:168px;top:812.5px;height:18px;line-height:18px;font-size:12.5px;color:#111;transform:scaleX(0.8943);">A$C5A0800B6 na Warstwa 1</span>
<span class="t" style="left:1057px;top:812.5px;height:18px;line-height:18px;font-size:12.5px;color:#111;transform:scaleX(0.8948);">Brak</span>
<span class="t" style="left:1266px;top:812.5px;height:18px;line-height:18px;font-size:12.5px;color:#111;transform:scaleX(0.8890);">C:0 M:0 Y:0 K:100</span>
<div class="a" style="left:0;top:838px;width:1439px;height:3px;background:linear-gradient(90deg,#b87a22 0,#c88c30 60px,#c48a34 113px,#d6b278 114px,#d6b278 545px,#e6d0a4 546px,#e6d0a4 600px,#d4a660 608px,#d2a868 853px,#c4aa7c 854px,#c2aa80 1375px,#c8962a 1385px,#c8962a 1439px)"></div>
<div class="a" style="left:0;top:838px;width:1439px;height:1px;background:linear-gradient(90deg,#d8a850 0,#d8a850 113px,#b08038 114px,#b08038 853px,#e0d2b4 854px,#e0d2b4 1375px,#d8a838 1385px)"></div>
<div class="a" style="left:113px;top:838px;width:1px;height:3px;background:#a67a34"></div><div class="a" style="left:173px;top:838px;width:1px;height:3px;background:#a67a34"></div><div class="a" style="left:175px;top:838px;width:1px;height:3px;background:#a67a34"></div><div class="a" style="left:231px;top:838px;width:1px;height:3px;background:#a67a34"></div><div class="a" style="left:235px;top:838px;width:1px;height:3px;background:#a67a34"></div><div class="a" style="left:293px;top:838px;width:1px;height:3px;background:#a67a34"></div><div class="a" style="left:297px;top:838px;width:1px;height:3px;background:#a67a34"></div><div class="a" style="left:357px;top:838px;width:1px;height:3px;background:#a67a34"></div><div class="a" style="left:359px;top:838px;width:1px;height:3px;background:#a67a34"></div><div class="a" style="left:419px;top:838px;width:1px;height:3px;background:#a67a34"></div><div class="a" style="left:423px;top:838px;width:1px;height:3px;background:#a67a34"></div><div class="a" style="left:483px;top:838px;width:1px;height:3px;background:#a67a34"></div><div class="a" style="left:487px;top:838px;width:1px;height:3px;background:#a67a34"></div><div class="a" style="left:545px;top:838px;width:1px;height:3px;background:#a67a34"></div><div class="a" style="left:600px;top:838px;width:1px;height:3px;background:#a67a34"></div><div class="a" style="left:604px;top:838px;width:1px;height:3px;background:#a67a34"></div><div class="a" style="left:668px;top:838px;width:1px;height:3px;background:#a67a34"></div><div class="a" style="left:730px;top:838px;width:1px;height:3px;background:#a67a34"></div><div class="a" style="left:794px;top:838px;width:1px;height:3px;background:#a67a34"></div><div class="a" style="left:853px;top:838px;width:1px;height:3px;background:#a67a34"></div>
<!-- colour palette -->
<div class="a" style="left:1422px;top:91px;width:17px;height:713px;background:#f4f4f4"></div>
<div class="vs" style="left:1421px;top:91px;height:713px;background:#d4d4d4"></div>
<div class="a" style="left:1422px;top:161px;width:17px;height:17px;background:#1a1a1a;box-sizing:border-box;border-left:1px solid #5c5c5c;border-top:1px solid #5c5c5c"></div>
<div class="a" style="left:1422px;top:178px;width:17px;height:17px;background:#333333;box-sizing:border-box;border-left:1px solid #5c5c5c;border-top:1px solid #5c5c5c"></div>
<div class="a" style="left:1422px;top:195px;width:17px;height:17px;background:#4d4d4d;box-sizing:border-box;border-left:1px solid #5c5c5c;border-top:1px solid #5c5c5c"></div>
<div class="a" style="left:1422px;top:212px;width:17px;height:17px;background:#666666;box-sizing:border-box;border-left:1px solid #5c5c5c;border-top:1px solid #5c5c5c"></div>
<div class="a" style="left:1422px;top:229px;width:17px;height:17px;background:#808080;box-sizing:border-box;border-left:1px solid #5c5c5c;border-top:1px solid #5c5c5c"></div>
<div class="a" style="left:1422px;top:246px;width:17px;height:17px;background:#999999;box-sizing:border-box;border-left:1px solid #5c5c5c;border-top:1px solid #5c5c5c"></div>
<div class="a" style="left:1422px;top:263px;width:17px;height:17px;background:#adadaf;box-sizing:border-box;border-left:1px solid #5c5c5c;border-top:1px solid #5c5c5c"></div>
<div class="a" style="left:1422px;top:280px;width:17px;height:17px;background:#c4c4c4;box-sizing:border-box;border-left:1px solid #5c5c5c;border-top:1px solid #5c5c5c"></div>
<div class="a" style="left:1422px;top:297px;width:17px;height:17px;background:#d9d9d9;box-sizing:border-box;border-left:1px solid #5c5c5c;border-top:1px solid #5c5c5c"></div>
<div class="a" style="left:1422px;top:314px;width:17px;height:17px;background:#ebebeb;box-sizing:border-box;border-left:1px solid #5c5c5c;border-top:1px solid #5c5c5c"></div>
<div class="a" style="left:1422px;top:331px;width:17px;height:17px;background:#ffffff;box-sizing:border-box;border-left:1px solid #5c5c5c;border-top:1px solid #5c5c5c"></div>
<div class="a" style="left:1422px;top:348px;width:17px;height:17px;background:#3a2d96;box-sizing:border-box;border-left:1px solid #5c5c5c;border-top:1px solid #5c5c5c"></div>
<div class="a" style="left:1422px;top:365px;width:17px;height:17px;background:#00a0d6;box-sizing:border-box;border-left:1px solid #5c5c5c;border-top:1px solid #5c5c5c"></div>
<div class="a" style="left:1422px;top:382px;width:17px;height:17px;background:#0aa05a;box-sizing:border-box;border-left:1px solid #5c5c5c;border-top:1px solid #5c5c5c"></div>
<div class="a" style="left:1422px;top:399px;width:17px;height:17px;background:#fde016;box-sizing:border-box;border-left:1px solid #5c5c5c;border-top:1px solid #5c5c5c"></div>
<div class="a" style="left:1422px;top:416px;width:17px;height:17px;background:#de2b1e;box-sizing:border-box;border-left:1px solid #5c5c5c;border-top:1px solid #5c5c5c"></div>
<div class="a" style="left:1422px;top:433px;width:17px;height:17px;background:#e3007f;box-sizing:border-box;border-left:1px solid #5c5c5c;border-top:1px solid #5c5c5c"></div>
<div class="a" style="left:1422px;top:450px;width:17px;height:17px;background:#a9458f;box-sizing:border-box;border-left:1px solid #5c5c5c;border-top:1px solid #5c5c5c"></div>
<div class="a" style="left:1422px;top:467px;width:17px;height:17px;background:#f57e00;box-sizing:border-box;border-left:1px solid #5c5c5c;border-top:1px solid #5c5c5c"></div>
<div class="a" style="left:1422px;top:484px;width:17px;height:17px;background:#ffbfc4;box-sizing:border-box;border-left:1px solid #5c5c5c;border-top:1px solid #5c5c5c"></div>
<div class="a" style="left:1422px;top:501px;width:17px;height:17px;background:#7d6f6b;box-sizing:border-box;border-left:1px solid #5c5c5c;border-top:1px solid #5c5c5c"></div>
<div class="a" style="left:1422px;top:518px;width:17px;height:17px;background:#dcdaf5;box-sizing:border-box;border-left:1px solid #5c5c5c;border-top:1px solid #5c5c5c"></div>
<div class="a" style="left:1422px;top:535px;width:17px;height:17px;background:#aba2e0;box-sizing:border-box;border-left:1px solid #5c5c5c;border-top:1px solid #5c5c5c"></div>
<div class="a" style="left:1422px;top:552px;width:17px;height:17px;background:#7b94d6;box-sizing:border-box;border-left:1px solid #5c5c5c;border-top:1px solid #5c5c5c"></div>
<div class="a" style="left:1422px;top:569px;width:17px;height:17px;background:#8a72c8;box-sizing:border-box;border-left:1px solid #5c5c5c;border-top:1px solid #5c5c5c"></div>
<div class="a" style="left:1422px;top:586px;width:17px;height:17px;background:#948bb8;box-sizing:border-box;border-left:1px solid #5c5c5c;border-top:1px solid #5c5c5c"></div>
<div class="a" style="left:1422px;top:603px;width:17px;height:17px;background:#4f6391;box-sizing:border-box;border-left:1px solid #5c5c5c;border-top:1px solid #5c5c5c"></div>
<div class="a" style="left:1422px;top:620px;width:17px;height:17px;background:#544f6d;box-sizing:border-box;border-left:1px solid #5c5c5c;border-top:1px solid #5c5c5c"></div>
<div class="a" style="left:1422px;top:637px;width:17px;height:17px;background:#70819e;box-sizing:border-box;border-left:1px solid #5c5c5c;border-top:1px solid #5c5c5c"></div>
<div class="a" style="left:1422px;top:654px;width:17px;height:17px;background:#0093cf;box-sizing:border-box;border-left:1px solid #5c5c5c;border-top:1px solid #5c5c5c"></div>
<div class="a" style="left:1422px;top:671px;width:17px;height:17px;background:#aedcf4;box-sizing:border-box;border-left:1px solid #5c5c5c;border-top:1px solid #5c5c5c"></div>
<div class="a" style="left:1422px;top:688px;width:17px;height:17px;background:#b7c9d6;box-sizing:border-box;border-left:1px solid #5c5c5c;border-top:1px solid #5c5c5c"></div>
<div class="a" style="left:1422px;top:705px;width:17px;height:17px;background:#8fa1ab;box-sizing:border-box;border-left:1px solid #5c5c5c;border-top:1px solid #5c5c5c"></div>
<div class="a" style="left:1422px;top:722px;width:17px;height:17px;background:#67767f;box-sizing:border-box;border-left:1px solid #5c5c5c;border-top:1px solid #5c5c5c"></div>
<div class="a" style="left:1422px;top:739px;width:17px;height:17px;background:#424c52;box-sizing:border-box;border-left:1px solid #5c5c5c;border-top:1px solid #5c5c5c"></div>
<div class="a" style="left:1422px;top:756px;width:17px;height:8px;background:#567572;box-sizing:border-box;border-left:1px solid #5c5c5c;border-top:1px solid #5c5c5c"></div>
<svg width="1439" height="841" viewBox="0 0 1439 841" style="left:0;top:0">
<rect x="1422.500" y="161.500" width="17" height="17" fill="none" stroke="#fff" stroke-width="1"/>
<rect x="1422.500" y="144.500" width="17" height="17" fill="#fff" stroke="#444" stroke-width="1"/>
<path d="M1424 146L1438 160M1438 146L1424 160" stroke="#222" stroke-width="1"/>
<path d="M1426.500 96h2M1430 96h2M1433.500 96h2" stroke="#c4c4c4" stroke-width="1.200"/>
<path d="M1428.300 100.500v9.400l5.200-4.700z" fill="#000"/>
<path d="M1426 126L1432 119.500" stroke="#c8c8c8" stroke-width="2.200" stroke-linecap="round"/>
<path d="M1430.500 118L1434 121.500" stroke="#bdbdbd" stroke-width="2"/>
<path d="M1432.300 119.500L1435 116.700" stroke="#bdbdbd" stroke-width="3.200" stroke-linecap="round"/>
<path d="M1427.500 137.500L1431 134L1434.500 137.500" fill="none" stroke="#d2d2d2" stroke-width="1.300"/>
<path d="M1427 771L1431 775L1435 771" fill="none" stroke="#cfcfcf" stroke-width="1.300"/>
<path d="M1427.200 786.500L1430.200 789.500L1427.200 792.500M1430.700 786.500L1433.700 789.500L1430.700 792.500" fill="none" stroke="#c4c4c4" stroke-width="1"/>
</svg>
<div class="a" style="left:1422px;top:0;width:16px;height:17px;"></div>
<!-- user icon -->
<svg width="20" height="20" viewBox="1420 0 20 20" style="left:1420px;top:0">
<rect x="1421" y="1" width="17" height="17" fill="#fff"/>
<rect x="1422.500" y="2.500" width="14" height="14" fill="#fdfbfd" stroke="#b4b4b6" stroke-width="1"/>
<ellipse cx="1429.800" cy="7.600" rx="2.300" ry="2.900" fill="#cf4a1a"/>
<path d="M1423.300 16C1424 13.300 1427 13.300 1428.600 11.800V9.500H1431V11.800C1432.600 13.300 1435.600 13.300 1436.300 16Z" fill="#bf4518"/>
</svg>
</body>
</html>
